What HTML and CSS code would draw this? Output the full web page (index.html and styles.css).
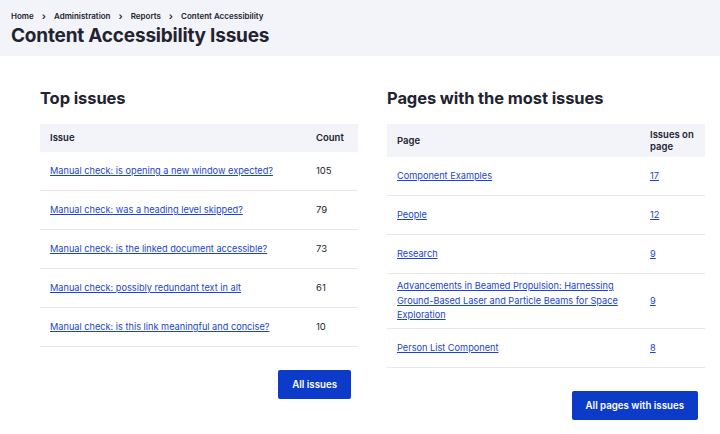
FILE: index.html
```html
<!DOCTYPE html>
<html lang="en">
<head>
    <meta charset="UTF-8">
    <meta name="viewport" content="width=device-width, initial-scale=1.0">
    <title>Content Accessibility Issues</title>
    <link rel="stylesheet" href="styles.css">
</head>
<body>
    <header class="page-header">
        <nav class="breadcrumb">
            <a href="#">Home</a>
            <span class="sep">&rsaquo;</span>
            <a href="#">Administration</a>
            <span class="sep">&rsaquo;</span>
            <a href="#">Reports</a>
            <span class="sep">&rsaquo;</span>
            <a href="#">Content Accessibility</a>
        </nav>
        <h1>Content Accessibility Issues</h1>
    </header>

    <main class="columns">
        <section class="panel">
            <h2>Top issues</h2>
            <table class="report">
                <colgroup>
                    <col>
                    <col class="col-count">
                </colgroup>
                <thead>
                    <tr><th>Issue</th><th>Count</th></tr>
                </thead>
                <tbody>
                    <tr><td><a href="#">Manual check: is opening a new window expected?</a></td><td>105</td></tr>
                    <tr><td><a href="#">Manual check: was a heading level skipped?</a></td><td>79</td></tr>
                    <tr><td><a href="#">Manual check: is the linked document accessible?</a></td><td>73</td></tr>
                    <tr><td><a href="#">Manual check: possibly redundant text in alt</a></td><td>61</td></tr>
                    <tr><td><a href="#">Manual check: is this link meaningful and concise?</a></td><td>10</td></tr>
                </tbody>
            </table>
            <div class="actions">
                <a class="button" href="#">All issues</a>
            </div>
        </section>

        <section class="panel">
            <h2>Pages with the most issues</h2>
            <table class="report">
                <colgroup>
                    <col>
                    <col class="col-pages">
                </colgroup>
                <thead>
                    <tr><th>Page</th><th class="two-line">Issues on page</th></tr>
                </thead>
                <tbody>
                    <tr><td><a href="#">Component Examples</a></td><td><a href="#">17</a></td></tr>
                    <tr><td><a href="#">People</a></td><td><a href="#">12</a></td></tr>
                    <tr><td><a href="#">Research</a></td><td><a href="#">9</a></td></tr>
                    <tr><td class="long"><a href="#">Advancements in Beamed Propulsion: Harnessing Ground-Based Laser and Particle Beams for Space Exploration</a></td><td><a href="#">9</a></td></tr>
                    <tr><td><a href="#">Person List Component</a></td><td><a href="#">8</a></td></tr>
                </tbody>
            </table>
            <div class="actions">
                <a class="button" href="#">All pages with issues</a>
            </div>
        </section>
    </main>
</body>
</html>
```

FILE: styles.css
```css
body {
    font-family: Inter, "Noto Sans", sans-serif;
    margin: 0;
    padding: 0;
    background-color: #fff;
    color: #222330;
}
.page-header {
    background-color: #f3f4f9;
    padding: 11px 11px 8px;
}
.breadcrumb {
    font-size: 8px;
    font-weight: 600;
    display: flex;
    align-items: center;
    gap: 8px;
}
.breadcrumb a {
    color: #222330;
    text-decoration: none;
}
.breadcrumb .sep {
    font-size: 10px;
    line-height: 1;
}
h1 {
    font-size: 19px;
    font-weight: 700;
    margin: 3px 0 0;
    line-height: 24px;
    letter-spacing: -0.2px;
}
.columns {
    display: grid;
    grid-template-columns: 1fr 1fr;
    gap: 29px;
    padding: 30px 15px 16px 40px;
}
h2 {
    font-size: 16.5px;
    font-weight: 700;
    margin: 0 0 14px;
    line-height: 24px;
    letter-spacing: -0.1px;
}
.report {
    width: 100%;
    border-collapse: collapse;
    table-layout: fixed;
    font-size: 9.5px;
}
.col-count {
    width: 52px;
}
.col-pages {
    width: 65px;
}
.report th {
    background-color: #f3f4f9;
    text-align: left;
    font-weight: 600;
    padding: 8px 10px;
    line-height: 12px;
}
.report th.two-line {
    padding-top: 5px;
    padding-bottom: 4px;
}
.report td {
    padding: 12px 10px;
    line-height: 14px;
    border-bottom: 1px solid #e6e7ee;
}
.report td.long {
    padding: 5px 10px;
    line-height: 14.5px;
}
.report td a {
    color: #1a45d0;
    font-size: 9.2px;
}
.actions {
    display: flex;
    justify-content: flex-end;
    padding: 23px 7px 0 0;
}
.button {
    background-color: #0c3bc9;
    color: #fff;
    font-size: 9.7px;
    font-weight: 600;
    text-decoration: none;
    padding: 9px 14px;
    line-height: 11px;
    border-radius: 2px;
}
```
